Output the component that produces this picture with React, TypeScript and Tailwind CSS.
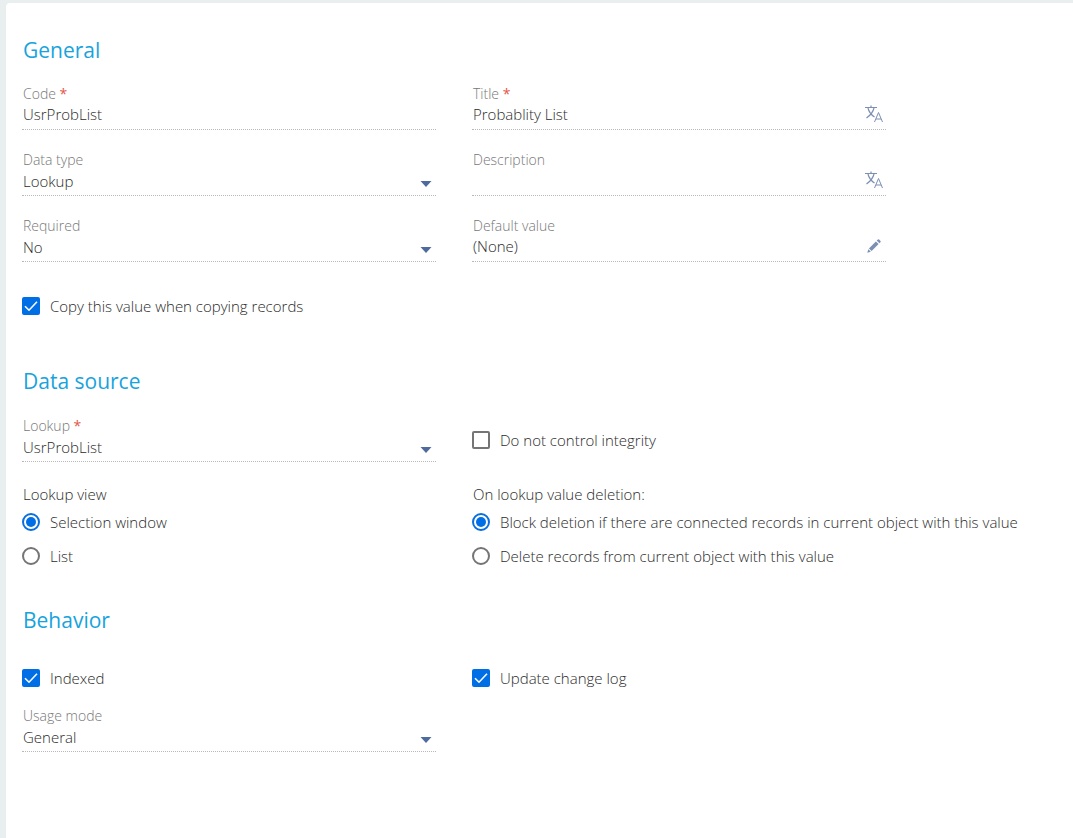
import React from 'react';

interface FieldProps {
  id: string;
  label: string;
  value: string;
  required?: boolean;
}

const FieldLabel: React.FC<{ id: string; label: string; required?: boolean }> = ({ id, label, required }) => (
  <label htmlFor={id} className="block pl-px text-sm leading-5 text-[#777777]">
    {label}
    {required && <span className="font-normal text-[#e5554a]"> *</span>}
  </label>
);

const TranslateIcon = () => (
  <svg width="18" height="18" viewBox="0 0 18 18" fill="none" stroke="currentColor" strokeWidth="1.2">
    <path d="M0 2.5H12M6 0.5V2.5M3 3C4 7.5 6.5 10 9.5 12M9 3C8 7.5 5 10.5 1.5 13" />
    <path d="M9.5 17L13.5 7.5L17.5 17M11 14H16" strokeWidth="1" />
  </svg>
);

const PencilIcon = () => (
  <svg width="14" height="14" viewBox="0 0 14 14" fill="currentColor">
    <path d="M0.3 13.7L1.3 10.2L3.8 12.7Z" />
    <path d="M1.9 9.4L8.9 2.4L11.6 5.1L4.6 12.1Z" />
    <path d="M9.7 1.6L10.9 0.4Q11.5 0 12.1 0.5L13.5 1.9Q14 2.5 13.6 3.1L12.4 4.3Z" />
  </svg>
);

const TextField: React.FC<FieldProps & { action?: string; icon?: React.ReactNode }> = ({
  id,
  label,
  value,
  required,
  action,
  icon,
}) => (
  <div>
    <FieldLabel id={id} label={label} required={required} />
    <div className="flex items-center border-b border-dotted border-[#b8b8b8] pb-[5px]">
      <input id={id} defaultValue={value} className="h-5 min-w-0 flex-1 bg-transparent pl-px outline-none" />
      {icon && (
        <button type="button" aria-label={action} className="flex w-6 justify-center text-[#7d8fb3]">
          {icon}
        </button>
      )}
    </div>
  </div>
);

const SelectField: React.FC<FieldProps> = ({ id, label, value, required }) => (
  <div>
    <FieldLabel id={id} label={label} required={required} />
    <div className="relative border-b border-dotted border-[#b8b8b8] pb-[5px]">
      <select id={id} className="block h-5 w-full appearance-none bg-transparent pl-px outline-none">
        <option>{value}</option>
      </select>
      <svg width="12" height="6" viewBox="0 0 12 6" className="pointer-events-none absolute right-1 bottom-2">
        <path d="M0.5 0H11.5L6 6Z" fill="#4f6a9c" />
      </svg>
    </div>
  </div>
);

const Checkbox: React.FC<{ label: string; checked?: boolean }> = ({ label, checked }) => (
  <label className="flex h-5 items-center gap-[10px]">
    <span className="relative flex">
      <input
        type="checkbox"
        defaultChecked={checked}
        className="peer size-[18px] appearance-none rounded-xs border-2 border-[#757575] checked:border-[#006fe6] checked:bg-[#006fe6]"
      />
      <svg
        viewBox="0 0 18 18"
        className="pointer-events-none absolute inset-0 hidden size-[18px] peer-checked:block"
        fill="none"
        stroke="white"
        strokeWidth="1.6"
      >
        <path d="M3 9.2L7 13.2L15 4.8" />
      </svg>
    </span>
    {label}
  </label>
);

const Radio: React.FC<{ name: string; label: string; checked?: boolean }> = ({ name, label, checked }) => (
  <label className="flex h-5 items-center gap-[10px] whitespace-nowrap">
    <input
      type="radio"
      name={name}
      defaultChecked={checked}
      className="size-[18px] shrink-0 appearance-none rounded-full border-2 border-[#757575] bg-clip-content p-[2px] checked:border-[#0a6fdc] checked:bg-[#006fe6]"
    />
    {label}
  </label>
);

const RadioGroup: React.FC<{ name: string; title: string; options: string[] }> = ({ name, title, options }) => (
  <fieldset className="min-w-0">
    <legend className="pl-px leading-5">{title}</legend>
    <div className="mt-2 flex flex-col gap-[14px]">
      {options.map((option, i) => (
        <Radio key={option} name={name} label={option} checked={i === 0} />
      ))}
    </div>
  </fieldset>
);

const SectionTitle: React.FC<{ children: React.ReactNode }> = ({ children }) => (
  <h2 className="pl-px text-[21px] leading-7 font-normal text-[#17a3dd]">{children}</h2>
);

const App: React.FC = () => {
  return (
    <div className="min-h-screen bg-[#e9eeee] pt-[3px] pl-[6px] font-['Open_Sans',sans-serif] text-[15px] font-[340] text-[#2b2b2b]">
      <form className="min-h-[calc(100vh-3px)] rounded-tl bg-white px-4 py-[33px]">
        <div className="max-w-[864px]">
          <section>
            <SectionTitle>General</SectionTitle>
            <div className="mt-5 grid grid-cols-2 gap-x-9 gap-y-5">
              <TextField id="code" label="Code" value="UsrProbList" required />
              <TextField id="title" label="Title" value="Probablity List" required action="Translate title" icon={<TranslateIcon />} />
              <SelectField id="data-type" label="Data type" value="Lookup" />
              <TextField id="description" label="Description" value="" action="Translate description" icon={<TranslateIcon />} />
              <SelectField id="required" label="Required" value="No" />
              <TextField id="default" label="Default value" value="(None)" action="Edit default value" icon={<PencilIcon />} />
            </div>
            <div className="mt-[34px]">
              <Checkbox label="Copy this value when copying records" checked />
            </div>
          </section>

          <section className="mt-[51px]">
            <SectionTitle>Data source</SectionTitle>
            <div className="mt-[21px] grid grid-cols-2 gap-x-9 gap-y-[22px]">
              <SelectField id="lookup" label="Lookup" value="UsrProbList" required />
              <div className="flex items-end pb-3">
                <Checkbox label="Do not control integrity" />
              </div>
              <RadioGroup name="lookup-view" title="Lookup view" options={['Selection window', 'List']} />
              <RadioGroup
                name="deletion"
                title="On lookup value deletion:"
                options={[
                  'Block deletion if there are connected records in current object with this value',
                  'Delete records from current object with this value',
                ]}
              />
            </div>
          </section>

          <section className="mt-10">
            <SectionTitle>Behavior</SectionTitle>
            <div className="mt-[34px] grid grid-cols-2 gap-x-9 gap-y-[18px]">
              <Checkbox label="Indexed" checked />
              <Checkbox label="Update change log" checked />
              <SelectField id="usage-mode" label="Usage mode" value="General" />
            </div>
          </section>
        </div>
      </form>
    </div>
  );
};

export default App;
